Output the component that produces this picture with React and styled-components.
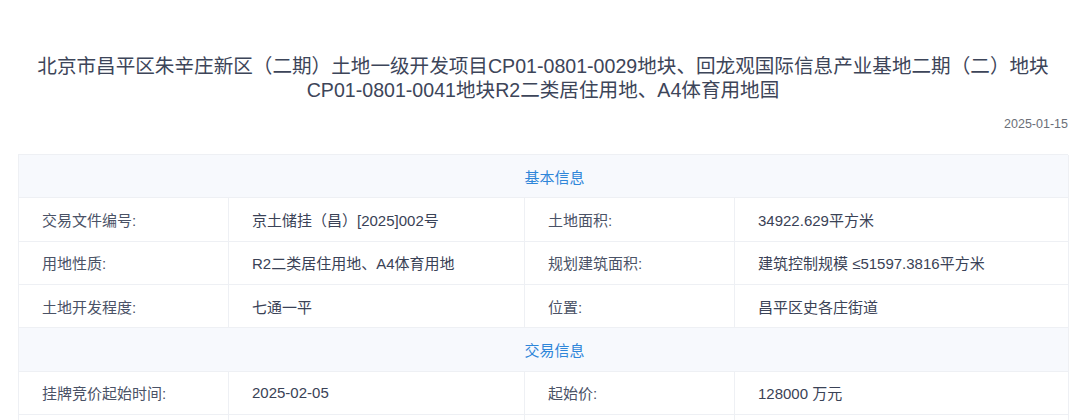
import React from "react";
import styled, { createGlobalStyle } from "styled-components";

const GlobalStyle = createGlobalStyle`
  body {
    margin: 0;
    background: #ffffff;
    font-family: "Liberation Sans", "Noto Sans CJK SC", sans-serif;
  }
`;

const Page = styled.div`
  padding: 54px 12px 0 18px;
`;

const Title = styled.h1`
  margin: 0;
  font-size: 19.6px;
  line-height: 24px;
  font-weight: 400;
  color: #3d4559;
  text-align: center;
`;

const DateLine = styled.div`
  margin-top: 14px;
  font-size: 12.5px;
  line-height: 16px;
  color: #6b6f78;
  text-align: right;
`;

const Table = styled.div`
  margin-top: 22px;
  display: grid;
  grid-template-columns: 210px 296px 210px 334px;
  border-top: 1px solid #eef0f4;
  border-left: 1px solid #eef0f4;
`;

const SectionHead = styled.div`
  grid-column: 1 / -1;
  height: 42.33px;
  display: flex;
  align-items: center;
  justify-content: center;
  padding-left: 22px;
  background: #f7f9fd;
  color: #2f86d9;
  font-size: 15px;
  border-right: 1px solid #eef0f4;
  border-bottom: 1px solid #eef0f4;
`;

const Cell = styled.div`
  height: 42.33px;
  display: flex;
  align-items: center;
  padding-left: 23px;
  font-size: 15px;
  color: ${(p) => (p.$label ? "#4a5266" : "#3a4256")};
  border-right: 1px solid #eef0f4;
  border-bottom: 1px solid #eef0f4;
  white-space: nowrap;
`;

const sections = [
  {
    title: "基本信息",
    rows: [
      ["交易文件编号:", "京土储挂（昌）[2025]002号", "土地面积:", "34922.629平方米"],
      ["用地性质:", "R2二类居住用地、A4体育用地", "规划建筑面积:", "建筑控制规模 ≤51597.3816平方米"],
      ["土地开发程度:", "七通一平", "位置:", "昌平区史各庄街道"],
    ],
  },
  {
    title: "交易信息",
    rows: [
      ["挂牌竞价起始时间:", "2025-02-05", "起始价:", "128000 万元"],
      ["", "", "", ""],
    ],
  },
];

export default function App() {
  return (
    <Page>
      <GlobalStyle />
      <Title>
        北京市昌平区朱辛庄新区（二期）土地一级开发项目CP01-0801-0029地块、回龙观国际信息产业基地二期（二）地块
        <br />
        CP01-0801-0041地块R2二类居住用地、A4体育用地国
      </Title>
      <DateLine>2025-01-15</DateLine>
      <Table>
        {sections.map((s) => (
          <React.Fragment key={s.title}>
            <SectionHead>{s.title}</SectionHead>
            {s.rows.map((r, i) =>
              r.map((c, j) => (
                <Cell key={`${s.title}-${i}-${j}`} $label={j % 2 === 0}>
                  {c}
                </Cell>
              ))
            )}
          </React.Fragment>
        ))}
      </Table>
    </Page>
  );
}
